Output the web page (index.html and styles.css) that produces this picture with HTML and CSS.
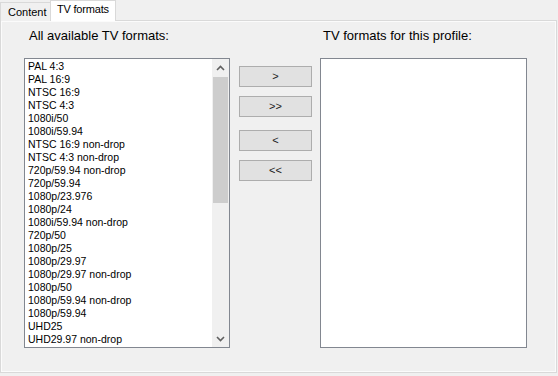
FILE: index.html
```html
<!DOCTYPE html>
<html>
<head>
<meta charset="utf-8">
<link rel="stylesheet" href="styles.css">
</head>
<body>
<div class="tabs">
  <div class="tab">Content</div>
  <div class="tab active">TV formats</div>
</div>
<div class="page">
  <div class="layout">
    <div class="label left-label">All available TV formats:</div>
    <div></div>
    <div class="label right-label">TV formats for this profile:</div>

    <div class="listbox">
      <ul class="items">
        <li>PAL 4:3</li>
        <li>PAL 16:9</li>
        <li>NTSC 16:9</li>
        <li>NTSC 4:3</li>
        <li>1080i/50</li>
        <li>1080i/59.94</li>
        <li>NTSC 16:9 non-drop</li>
        <li>NTSC 4:3 non-drop</li>
        <li>720p/59.94 non-drop</li>
        <li>720p/59.94</li>
        <li>1080p/23.976</li>
        <li>1080p/24</li>
        <li>1080i/59.94 non-drop</li>
        <li>720p/50</li>
        <li>1080p/25</li>
        <li>1080p/29.97</li>
        <li>1080p/29.97 non-drop</li>
        <li>1080p/50</li>
        <li>1080p/59.94 non-drop</li>
        <li>1080p/59.94</li>
        <li>UHD25</li>
        <li>UHD29.97 non-drop</li>
      </ul>
      <div class="scrollbar">
        <div class="arrow"><svg width="9" height="6" viewBox="0 0 9 6"><path d="M1 5 L4.5 1.5 L8 5" fill="none" stroke="#606060" stroke-width="1.6"/></svg></div>
        <div class="track"><div class="thumb"></div></div>
        <div class="arrow"><svg width="9" height="6" viewBox="0 0 9 6"><path d="M1 1 L4.5 4.5 L8 1" fill="none" stroke="#606060" stroke-width="1.6"/></svg></div>
      </div>
    </div>

    <div class="buttons">
      <div class="btn">&gt;</div>
      <div class="btn">&gt;&gt;</div>
      <div class="btn gap-top">&lt;</div>
      <div class="btn">&lt;&lt;</div>
    </div>

    <div class="listbox empty"></div>
  </div>
</div>
</body>
</html>
```
FILE: styles.css
```css
html, body {
  margin: 0;
  padding: 0;
  background: #f0f0f0;
  width: 558px;
  height: 376px;
  overflow: hidden;
  font-family: "Liberation Sans", Arial, sans-serif;
  color: #000;
}

.tabs {
  display: flex;
  align-items: flex-end;
  height: 21px;
  position: relative;
  z-index: 2;
}

.tab {
  box-sizing: border-box;
  height: 19px;
  width: 51px;
  border: 1px solid #d9d9d9;
  border-bottom: none;
  background: #f0f0f0;
  font-size: 11px;
  line-height: 18px;
  padding-left: 7px;
  white-space: nowrap;
}

.tab.active {
  height: 21px;
  width: 66px;
  margin-left: -1px;
  background: #fff;
  padding-left: 6px;
  line-height: 17px;
  letter-spacing: -0.2px;
}

.page {
  box-sizing: border-box;
  margin-top: -1px;
  width: 557px;
  height: 353px;
  border: 1px solid #d9d9d9;
  box-shadow: inset 0 0 0 1px #fbfbfb;
  background: #f0f0f0;
  padding: 7px 0 0 23px;
}

.layout {
  display: grid;
  grid-template-columns: 206px 73px 206px;
  grid-template-rows: 30px 290px;
  column-gap: 9px;
}

.label {
  font-size: 13px;
  line-height: 16px;
  padding-left: 5px;
  white-space: nowrap;
}

.right-label {
  padding-left: 3px;
  margin-left: -1px;
}

.listbox {
  box-sizing: border-box;
  border: 1px solid #828790;
  background: #fff;
  display: flex;
  overflow: hidden;
}

.listbox.empty {
  margin-left: -1px;
}

.items {
  list-style: none;
  margin: 0;
  padding: 1px 0 0 3px;
  flex: 1;
  font-size: 10.5px;
  line-height: 13px;
  white-space: nowrap;
}

.scrollbar {
  width: 17px;
  background: #f0f0f0;
  display: flex;
  flex-direction: column;
}

.arrow {
  height: 17px;
  display: flex;
  align-items: center;
  justify-content: center;
}

.track {
  flex: 1;
}

.thumb {
  height: 126px;
  margin: 1px 1px 0 1px;
  background: #cdcdcd;
}

.buttons {
  display: flex;
  flex-direction: column;
  gap: 9px;
  padding-top: 8px;
}

.btn {
  box-sizing: border-box;
  height: 21px;
  border: 1px solid #adadad;
  background: #e1e1e1;
  font-size: 11px;
  line-height: 18px;
  text-align: center;
  color: #222;
}

.btn.gap-top {
  margin-top: 4px;
}
```
